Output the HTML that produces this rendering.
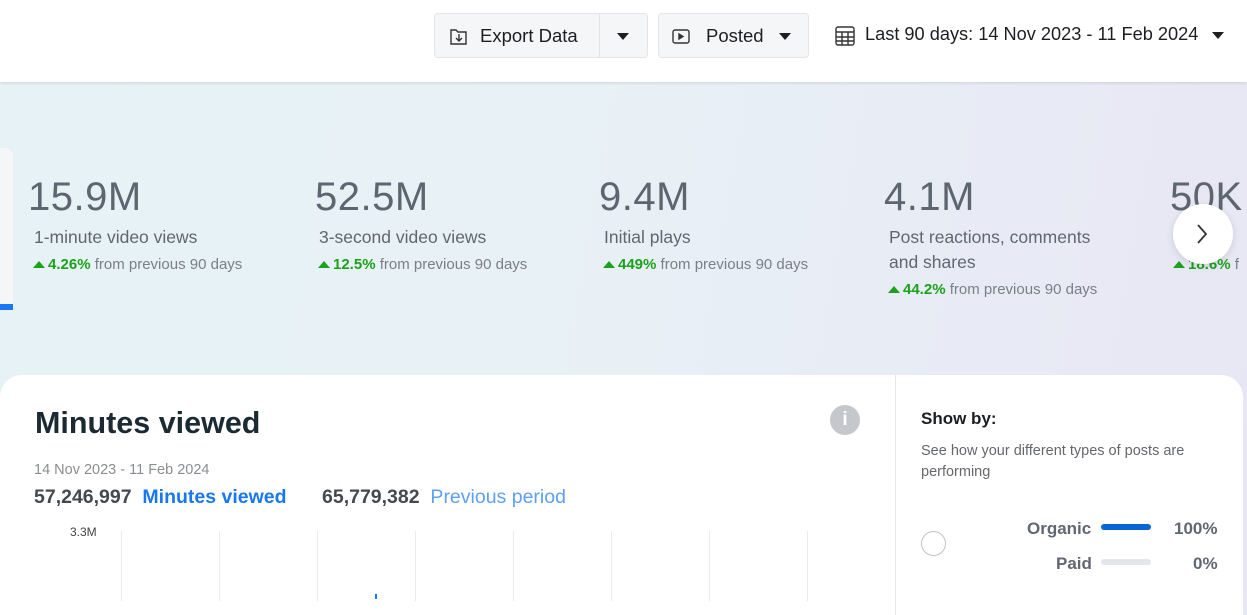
<!DOCTYPE html>
<html><head><style>
*{margin:0;padding:0;box-sizing:border-box}
body{width:1247px;height:599px;overflow:hidden;font-family:"Liberation Sans",sans-serif;position:relative;background:linear-gradient(100deg,#e6f2f5 0%,#e8f1f6 45%,#e8e6f4 100%)}
.hdr{position:absolute;left:0;top:0;width:1247px;height:82px;background:#fff;box-shadow:0 1px 3px rgba(0,0,0,.12)}
.btn{position:absolute;top:13px;height:45px;background:#f5f6f7;border:1px solid #e3e5e8;border-radius:4px;font-size:18.5px;color:#1c1e21;display:flex;align-items:center}
.abs{position:absolute}
.big{position:absolute;top:175px;font-size:40px;color:#5d6670;letter-spacing:.5px}
.lbl{position:absolute;font-size:17.5px;color:#606770;line-height:25px}
.chg{position:absolute;font-size:15px;color:#7a8087}
.chg b{color:#1aa31a}
.tri{display:inline-block;width:0;height:0;border-left:6px solid transparent;border-right:6px solid transparent;border-bottom:7px solid #1aa31a;margin-right:3px;vertical-align:1px}
.card{position:absolute;left:0;top:375px;width:1243px;height:240px;background:#fff;border-radius:22px 22px 0 0}
.dd{display:inline-block;width:0;height:0;border-left:6px solid transparent;border-right:6px solid transparent;border-top:7px solid #1c1e21}
.gl{position:absolute;top:531px;width:1px;height:70px;background:#e9ebee}
</style></head><body>
<div class="hdr">
 <div class="btn" style="left:434px;width:214px">
  <svg class="abs" style="left:14px;top:12px" width="20" height="20" viewBox="0 0 20 20" fill="none" stroke="#333" stroke-width="1.4"><path d="M2 4h5l2 2h8v12H2z" /><path d="M10 8v7M7 12l3 3 3-3"/></svg>
  <span class="abs" style="left:45px;top:11px">Export Data</span>
  <div class="abs" style="left:164px;top:0;width:1px;height:43px;background:#e3e5e8"></div>
  <span class="dd abs" style="left:182px;top:19px"></span>
 </div>
 <div class="btn" style="left:658px;width:151px">
  <svg class="abs" style="left:12px;top:12px" width="20" height="20" viewBox="0 0 20 20" fill="none" stroke="#333" stroke-width="1.4"><rect x="2" y="4" width="16" height="13" rx="2"/><path d="M8 8v5l4-2.5z" fill="#333"/></svg>
  <span class="abs" style="left:47px;top:11px">Posted</span>
  <span class="dd abs" style="left:120px;top:19px"></span>
 </div>
 <svg class="abs" style="left:835px;top:25px" width="20" height="21" viewBox="0 0 20 21" fill="none" stroke="#333" stroke-width="1.4"><rect x="1" y="2" width="18" height="18" rx="2"/><path d="M1 7h18M1 12h18M1 16h18M7 7v13M13 7v13"/></svg>
 <span class="abs" style="left:865px;top:24px;font-size:18.2px;color:#1c1e21">Last 90 days: 14 Nov 2023 - 11 Feb 2024</span>
 <span class="dd abs" style="left:1212px;top:32px"></span>
</div>

<div class="abs" style="left:0;top:148px;width:13px;height:162px;background:#f4f6f8;border-radius:0 8px 0 0"></div>
<div class="abs" style="left:0;top:304px;width:13px;height:6px;background:#1877f2"></div>

<div class="big" style="left:28px">15.9M</div>
<div class="lbl" style="left:34px;top:225px">1-minute video views</div>
<div class="chg" style="left:33px;top:256px"><span class="tri"></span><b>4.26%</b> from previous 90 days</div>

<div class="big" style="left:315px">52.5M</div>
<div class="lbl" style="left:319px;top:225px">3-second video views</div>
<div class="chg" style="left:318px;top:256px"><span class="tri"></span><b>12.5%</b> from previous 90 days</div>

<div class="big" style="left:599px">9.4M</div>
<div class="lbl" style="left:604px;top:225px">Initial plays</div>
<div class="chg" style="left:603px;top:256px"><span class="tri"></span><b>449%</b> from previous 90 days</div>

<div class="big" style="left:884px">4.1M</div>
<div class="lbl" style="left:889px;top:225px">Post reactions, comments<br>and shares</div>
<div class="chg" style="left:888px;top:281px"><span class="tri"></span><b>44.2%</b> from previous 90 days</div>

<div class="big" style="left:1170px">50K</div>
<div class="chg" style="left:1173px;top:256px"><span class="tri"></span><b>18.6%</b> f</div>
<div class="abs" style="left:1173px;top:204px;width:60px;height:60px;border-radius:50%;background:#fff;box-shadow:0 2px 8px rgba(0,0,0,.12)">
 <svg class="abs" style="left:22px;top:19px" width="14" height="22" viewBox="0 0 14 22" fill="none" stroke="#333" stroke-width="1.8"><path d="M3 2l8 9-8 9"/></svg>
</div>

<div class="card">
 <div class="abs" style="left:35px;top:31px;font-size:30.5px;font-weight:bold;color:#1c2b33">Minutes viewed</div>
 <div class="abs" style="left:830px;top:30px;width:30px;height:30px;border-radius:50%;background:#c4c7cc;color:#fff;font-weight:bold;font-size:19px;text-align:center;line-height:30px">i</div>
 <div class="abs" style="left:34px;top:87px;font-size:14.5px;color:#8a8d91">14 Nov 2023 - 11 Feb 2024</div>
 <div class="abs" style="left:34px;top:111px;font-size:19.5px;font-weight:bold;color:#444950">57,246,997 <span style="color:#1877f2">&nbsp;Minutes viewed</span></div>
 <div class="abs" style="left:322px;top:111px;font-size:19.5px;font-weight:bold;color:#444950">65,779,382 <span style="color:#5ea0f5;font-weight:normal">&nbsp;Previous period</span></div>
 <div class="abs" style="left:70px;top:150px;font-size:12px;color:#444">3.3M</div>
 <div class="abs" style="left:895px;top:0;width:1px;height:240px;background:#e4e6eb"></div>
 <div class="abs" style="left:921px;top:34px;font-size:17px;font-weight:bold;color:#1c1e21">Show by:</div>
 <div class="abs" style="left:921px;top:66px;font-size:14.5px;color:#65676b;line-height:21px;width:300px">See how your different types of posts are performing</div>
 <div class="abs" style="left:921px;top:156px;width:25px;height:25px;border-radius:50%;border:1.5px solid #bec3c9"></div>
 <div class="abs" style="left:1027px;top:144px;font-size:17px;font-weight:bold;color:#606770">Organic</div>
 <div class="abs" style="left:1101px;top:149px;width:50px;height:6px;border-radius:3px;background:#0866d6"></div>
 <div class="abs" style="left:1174px;top:144px;font-size:17px;font-weight:bold;color:#606770">100%</div>
 <div class="abs" style="left:1056px;top:179px;font-size:17px;font-weight:bold;color:#606770">Paid</div>
 <div class="abs" style="left:1101px;top:184px;width:50px;height:6px;border-radius:3px;background:#e4e6eb"></div>
 <div class="abs" style="left:1193px;top:179px;font-size:17px;font-weight:bold;color:#606770">0%</div>
</div>
<div class="gl" style="left:121px"></div><div class="gl" style="left:219px"></div><div class="gl" style="left:317px"></div><div class="gl" style="left:415px"></div><div class="gl" style="left:513px"></div><div class="gl" style="left:611px"></div><div class="gl" style="left:709px"></div><div class="gl" style="left:807px"></div>
<div class="abs" style="left:375px;top:594px;width:2px;height:5px;background:#1877f2"></div>
</body></html>
